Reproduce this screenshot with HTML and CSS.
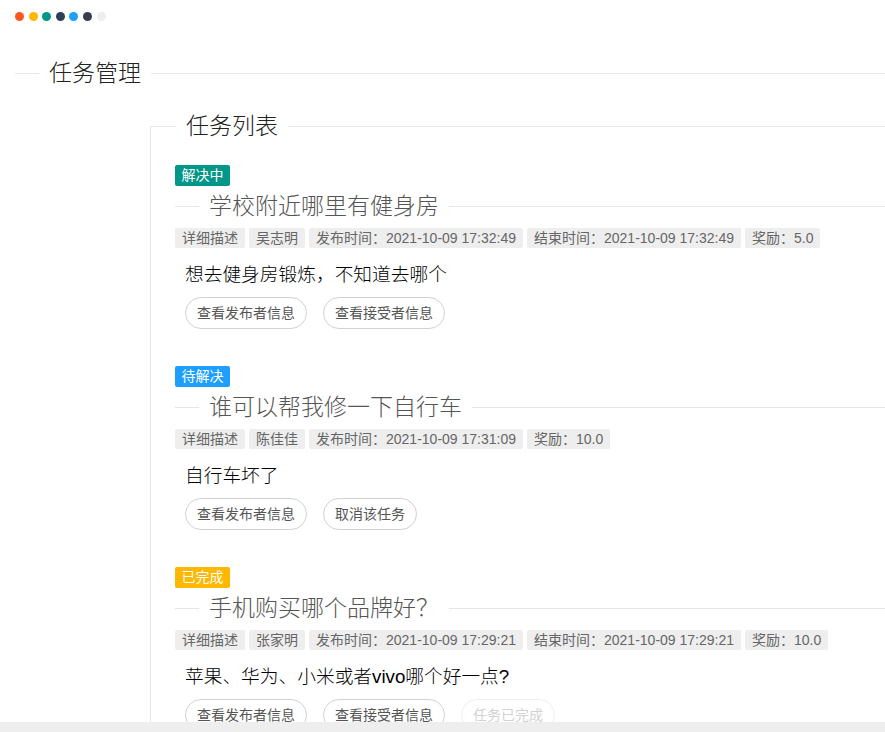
FILE: index.html
```html
<!DOCTYPE html>
<html lang="zh-CN">
<head>
<meta charset="utf-8">
<title>任务管理</title>
<link rel="stylesheet" href="styles.css">
</head>
<body>
<div class="page">
  <div class="dots">
    <span class="dot red"></span>
    <span class="dot orange"></span>
    <span class="dot green"></span>
    <span class="dot cyan"></span>
    <span class="dot blue"></span>
    <span class="dot black"></span>
    <span class="dot gray"></span>
  </div>

  <fieldset class="field-title main-title"><legend>任务管理</legend></fieldset>

  <fieldset class="task-box">
    <legend>任务列表</legend>

    <div class="task">
      <span class="badge badge-green">解决中</span>
      <fieldset class="field-title sub-title"><legend>学校附近哪里有健身房</legend></fieldset>
      <div class="tags">
        <span class="tag">详细描述</span>
        <span class="tag">吴志明</span>
        <span class="tag">发布时间：2021-10-09 17:32:49</span>
        <span class="tag">结束时间：2021-10-09 17:32:49</span>
        <span class="tag">奖励：5.0</span>
      </div>
      <div class="task-body">
        <h3 class="desc">想去健身房锻炼，不知道去哪个</h3>
        <div class="actions">
          <button class="btn">查看发布者信息</button>
          <button class="btn">查看接受者信息</button>
        </div>
      </div>
    </div>

    <div class="task">
      <span class="badge badge-blue">待解决</span>
      <fieldset class="field-title sub-title"><legend>谁可以帮我修一下自行车</legend></fieldset>
      <div class="tags">
        <span class="tag">详细描述</span>
        <span class="tag">陈佳佳</span>
        <span class="tag">发布时间：2021-10-09 17:31:09</span>
        <span class="tag">奖励：10.0</span>
      </div>
      <div class="task-body">
        <h3 class="desc">自行车坏了</h3>
        <div class="actions">
          <button class="btn">查看发布者信息</button>
          <button class="btn">取消该任务</button>
        </div>
      </div>
    </div>

    <div class="task">
      <span class="badge badge-orange">已完成</span>
      <fieldset class="field-title sub-title"><legend>手机购买哪个品牌好？</legend></fieldset>
      <div class="tags">
        <span class="tag">详细描述</span>
        <span class="tag">张家明</span>
        <span class="tag">发布时间：2021-10-09 17:29:21</span>
        <span class="tag">结束时间：2021-10-09 17:29:21</span>
        <span class="tag">奖励：10.0</span>
      </div>
      <div class="task-body">
        <h3 class="desc">苹果、华为、小米或者vivo哪个好一点?</h3>
        <div class="actions">
          <button class="btn">查看发布者信息</button>
          <button class="btn">查看接受者信息</button>
          <button class="btn btn-disabled" disabled>任务已完成</button>
        </div>
      </div>
    </div>
  </fieldset>
</div>
<div class="scroll-track"></div>
</body>
</html>
```

FILE: styles.css
```css
html, body {
  margin: 0;
  overflow: hidden;
  background: #fff;
}

body {
  font-family: "Liberation Sans", "Noto Sans CJK SC", sans-serif;
  color: #333;
}

.page {
  width: 1000px;
  padding: 12px 15px 0;
}

/* colour dots */
.dots {
  display: flex;
  gap: 4.6px;
  height: 9px;
}

.dot {
  width: 9px;
  height: 9px;
  border-radius: 50%;
}

.red { background: #ff5722; }
.orange { background: #ffb800; }
.green { background: #009688; }
.cyan { background: #2f4056; }
.blue { background: #1e9fff; }
.black { background: #393d49; }
.gray { background: #eeeeee; }

/* fieldsets */
fieldset {
  margin: 0;
  min-inline-size: 0;
}

legend {
  padding: 0 10px;
  margin-left: 24px;
  font-size: 23px;
  line-height: 30px;
  font-weight: 300;
}

.field-title {
  padding: 0;
  border: 0;
  border-top: 1px solid #e6e6e6;
}

.main-title {
  margin-top: 37px;
}

.main-title legend {
  color: #222;
}

.task-box {
  margin: 23px 0 0 135px;
  padding: 24px 0 0 24px;
  border: 1px solid #e6e6e6;
}

.task-box > legend {
  margin-left: 1px;
  color: #222;
}

.task + .task {
  margin-top: 37px;
}

.badge {
  display: block;
  width: fit-content;
  height: 21px;
  line-height: 21px;
  padding: 0 6.5px;
  font-size: 14px;
  color: #fff;
  border-radius: 2px;
}

.badge-green { background: #009688; }
.badge-blue { background: #1e9fff; }
.badge-orange { background: #ffb800; }

.sub-title {
  margin-top: 5px;
}

.sub-title legend {
  color: #555;
}

.tags {
  display: flex;
  gap: 4px;
  margin-top: 7px;
}

.tag {
  height: 20px;
  line-height: 20px;
  padding: 0 7px;
  background: #eeeeee;
  color: #666;
  font-size: 14px;
  border-radius: 2px;
  white-space: nowrap;
}

.task-body {
  padding-left: 10px;
}

.desc {
  margin: 14px 0 0;
  font-size: 18.72px;
  line-height: 26px;
  font-weight: 300;
  color: #000;
}

.actions {
  display: flex;
  gap: 16px;
  margin-top: 9px;
}

.btn {
  height: 32px;
  box-sizing: border-box;
  line-height: 30px;
  padding: 0 11px;
  border: 1px solid #d2d2d2;
  border-radius: 100px;
  background: #fff;
  color: #555;
  font-size: 14px;
  font-family: inherit;
  white-space: nowrap;
}

.btn-disabled {
  border-color: #eeeeee;
  color: #d2d2d2;
}

.scroll-track {
  position: fixed;
  left: 0;
  right: 0;
  bottom: 0;
  height: 10.5px;
  background: #eeeeee;
}
```
